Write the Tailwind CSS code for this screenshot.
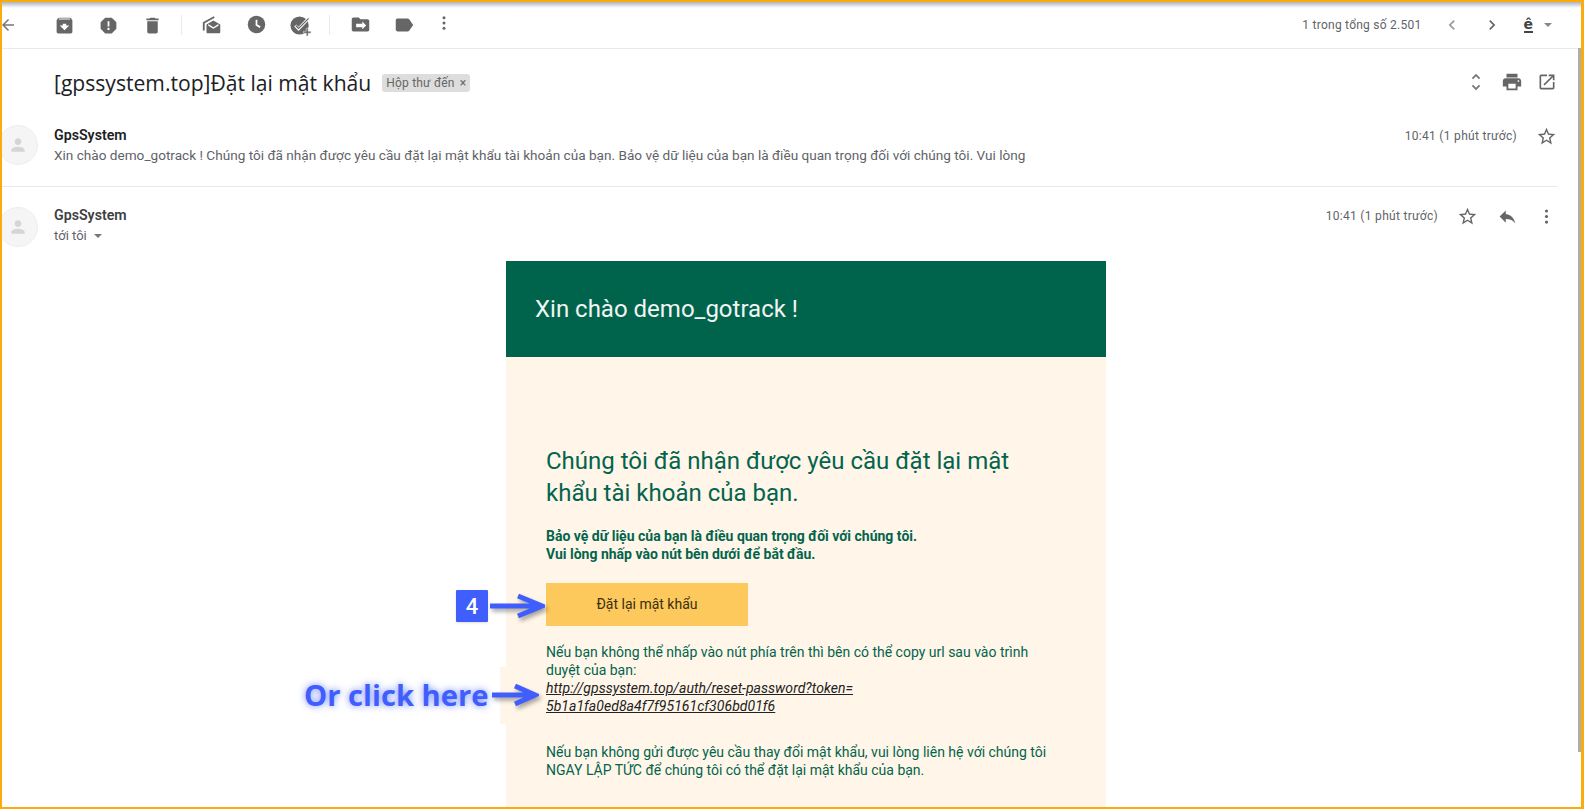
<!DOCTYPE html>
<html lang="en">
  <head>
    <meta charset="UTF-8" />
    <title>Gmail</title>
    <script src="https://cdn.jsdelivr.net/npm/@tailwindcss/browser@4"></script>
  </head>

  <body class="h-[809px] w-[1584px] overflow-hidden bg-white font-['Roboto',sans-serif]">
    <div class="relative h-[809px] w-[1584px] overflow-hidden border-t-[2px] border-b-[2px] border-l-[2px] border-r-[3px] border-[#fbab0c]">
      <!-- top shadow -->
      <div class="absolute top-0 left-0 right-0 h-[6px] bg-gradient-to-b from-gray-400/80 to-transparent"></div>
      <!-- scrollbar -->
      <div class="absolute top-[46px] right-0 h-[704px] w-[3px] bg-[#adadad]"></div>

      <!-- toolbar -->
      <div class="flex h-[47px] items-center justify-between border-b border-[#e8eaed] text-[#777777]">
        <div class="flex items-center">
          <svg class="ml-[-3px] h-[18px] w-[18px] fill-[#777777]" viewBox="0 0 24 24"><path d="M20 11H7.830l5.590-5.590L12 4l-8 8 8 8 1.410-1.410L7.830 13H20v-2z" /></svg>
          <div class="ml-[25px] flex w-[132px]">
            <div class="flex w-[44px] justify-center"><svg class="h-[21px] w-[21px] fill-[#666666]" viewBox="0 0 24 24"><path d="M20.540 5.230l-1.390-1.680C18.880 3.210 18.470 3 18 3H6c-.47 0-.88.21-1.160.55L3.460 5.230C3.170 5.570 3 6.020 3 6.500V19c0 1.100.9 2 2 2h14c1.100 0 2-.9 2-2V6.500c0-.48-.17-.93-.46-1.270zM12 17.500L6.500 12H10v-2h4v2h3.500L12 17.500zM5.120 5l.81-1h12l.94 1H5.120z" /></svg></div>
            <div class="flex w-[44px] justify-center"><svg class="h-[21px] w-[21px] fill-[#666666]" viewBox="0 0 24 24"><path d="M15.730 3H8.270L3 8.270v7.460L8.270 21h7.460L21 15.730V8.270L15.730 3zM12 17.300c-.72 0-1.300-.58-1.300-1.300 0-.72.58-1.300 1.300-1.300.72 0 1.300.58 1.300 1.300 0 .72-.58 1.300-1.300 1.300zm1-4.300h-2V7h2v6z" /></svg></div>
            <div class="flex w-[44px] justify-center"><svg class="h-[21px] w-[21px] fill-[#666666]" viewBox="0 0 24 24"><path d="M6 19c0 1.100.9 2 2 2h8c1.100 0 2-.9 2-2V7H6v12zM19 4h-3.500l-1-1h-5l-1 1H5v2h14V4z" /></svg></div>
          </div>
          <div class="mr-[8px] ml-[7px] h-[20px] w-px bg-[#e8eaed]"></div>
          <div class="flex">
            <div class="flex w-[44px] justify-center"><svg class="h-[22px] w-[22px] fill-[#666666]" viewBox="0 0 24 24"><path d="M2 9 14 2.500l1 1.700L4 10v8H2z" /><path d="M6 11.500 13.500 7 21 11.500V20c0 .6-.4 1-1 1H7c-.6 0-1-.4-1-1zm7.500 4.700 5.500-3.400v-1.800l-5.500 3.400-5.500-3.400v1.800z" /></svg></div>
            <div class="flex w-[44px] justify-center"><svg class="h-[21px] w-[21px]" viewBox="0 0 24 24"><circle cx="12" cy="12" r="10" class="fill-[#666666]" /><path d="M12 6.500V12.500l4.200 2.500" class="fill-none stroke-white stroke-2" /></svg></div>
            <div class="flex w-[44px] justify-center"><svg class="h-[23px] w-[23px]" viewBox="0 0 24 24"><circle cx="11" cy="12" r="9.500" class="fill-[#666666]" /><path d="M6.500 12l3.500 3.500L21 4" class="fill-none stroke-white stroke-[3]" /><path d="M7 12l3 3L20.500 4.500" class="fill-none stroke-[#666666] stroke-[1.200]" /><path d="M18 15h2v3h3v2h-3v3h-2v-3h-3v-2h3z" class="fill-[#666666] stroke-white stroke-[0.5]" /></svg></div>
          </div>
          <div class="mr-[8px] ml-[7px] h-[20px] w-px bg-[#e8eaed]"></div>
          <div class="flex">
            <div class="flex w-[44px] justify-center"><svg class="h-[21px] w-[21px] fill-[#666666]" viewBox="0 0 24 24"><path fill-rule="evenodd" d="M20 6h-8l-2-2H4c-1.100 0-2 .9-2 2v12c0 1.100.9 2 2 2h16c1.100 0 2-.9 2-2V8c0-1.100-.9-2-2-2zm-6 2.500L18.500 13 14 17.500V15H7v-4h7z" /></svg></div>
            <div class="flex w-[44px] justify-center"><svg class="h-[22px] w-[22px] fill-[#666666]" viewBox="0 0 24 24"><path d="M17.630 5.840C17.270 5.330 16.670 5 16 5L5 5.010C3.900 5.010 3 5.900 3 7v10c0 1.100.9 1.990 2 1.990L16 19c.67 0 1.270-.33 1.630-.84L22 12l-4.370-6.160z" /></svg></div>
            <div class="flex w-[36px] justify-center"><svg class="h-[18px] w-[18px] fill-[#666666]" viewBox="0 0 24 24"><circle cx="12" cy="5" r="2" /><circle cx="12" cy="12" r="2" /><circle cx="12" cy="19" r="2" /></svg></div>
          </div>
        </div>
        <div class="flex items-center">
          <span class="text-[12px] tracking-[0.25px] text-[#5f6368]">1 trong tổng số 2.501</span>
          <div class="ml-[19px] flex w-[62px] justify-between">
            <div class="flex w-[22px] justify-center"><svg class="h-[20px] w-[20px] fill-[#9a9a9a]" viewBox="0 0 24 24"><path d="M15.410 7.410L14 6l-6 6 6 6 1.410-1.410L10.830 12z" /></svg></div>
            <div class="flex w-[22px] justify-center"><svg class="h-[20px] w-[20px] fill-[#666666]" viewBox="0 0 24 24"><path d="M8.590 16.590L10 18l6-6-6-6-1.410 1.410L13.170 12z" /></svg></div>
          </div>
          <span class="ml-[21px] border-b-[2px] border-[#444444] font-['DejaVu_Sans',sans-serif] text-[14px] leading-[14px] font-semibold text-[#444444]">ê</span>
          <div class="mr-[29px] ml-[11px] h-0 w-0 border-x-[4px] border-t-[4px] border-x-transparent border-t-[#888888]"></div>
        </div>
      </div>

      <!-- subject -->
      <div class="flex h-[70px] items-center justify-between pr-[24px] pl-[52px]">
        <div class="mt-[-2px] flex items-center">
          <h1 class="font-['Open_Sans',sans-serif] text-[21.100px] leading-[28px] text-[#202124]">[gpssystem.top]Đặt lại mật khẩu</h1>
          <span class="ml-[11px] flex h-[18px] items-center rounded-[3px] bg-[#dddddd] px-[4px] text-[12px] tracking-[0.2px] text-[#666666]">Hộp thư đến <span class="ml-[5px] text-[12px]">×</span></span>
        </div>
        <div class="mt-[-4px] flex items-center gap-[14px]">
          <svg class="h-[22px] w-[22px] fill-[#777777]" viewBox="0 0 24 24"><path d="M12 5.830L15.170 9l1.410-1.410L12 3 7.410 7.590 8.830 9 12 5.830zm0 12.340L8.830 15l-1.410 1.410L12 21l4.590-4.590L15.170 15 12 18.170z" /></svg>
          <svg class="h-[22px] w-[22px] fill-[#666666]" viewBox="0 0 24 24"><path d="M19 8H5c-1.660 0-3 1.340-3 3v6h4v4h12v-4h4v-6c0-1.660-1.340-3-3-3zm-3 11H8v-5h8v5zm3-7c-.55 0-1-.45-1-1s.45-1 1-1 1 .45 1 1-.45 1-1 1zm-1-9H6v4h12V3z" /></svg>
          <svg class="h-[20px] w-[20px] fill-[#666666]" viewBox="0 0 24 24"><path d="M19 19H5V5h7V3H5c-1.110 0-2 .9-2 2v14c0 1.100.89 2 2 2h14c1.100 0 2-.9 2-2v-7h-2v7zM14 3v2h3.590l-9.830 9.830 1.410 1.410L19 6.410V10h2V3h-7z" /></svg>
        </div>
      </div>

      <!-- collapsed message -->
      <div class="mr-[24px] flex h-[68px] justify-between border-b border-[#e8e8e8]">
        <div class="flex">
          <div class="mt-[6px] ml-[-4px] flex h-[40px] w-[40px] items-center justify-center rounded-full border border-[#eeeeee] bg-[#f5f5f5]">
            <svg class="h-[20px] w-[20px] fill-[#d5d5d5]" viewBox="0 0 24 24"><path d="M12 12c2.210 0 4-1.790 4-4s-1.790-4-4-4-4 1.790-4 4 1.790 4 4 4zm0 2c-2.670 0-8 1.340-8 4v2h16v-2c0-2.660-5.330-4-8-4z" /></svg>
          </div>
          <div class="ml-[16px] pt-[7px]">
            <p class="text-[14.200px] leading-[18px] font-semibold text-[#202124]">GpsSystem</p>
            <p class="mt-[2px] text-[13.600px] leading-[18px] text-[#5f6368]">Xin chào demo_gotrack ! Chúng tôi đã nhận được yêu cầu đặt lại mật khẩu tài khoản của bạn. Bảo vệ dữ liệu của bạn là điều quan trọng đối với chúng tôi. Vui lòng</p>
          </div>
        </div>
        <div class="flex h-[34px] items-center">
          <span class="text-[12px] tracking-[0.3px] text-[#5f6368]">10:41 (1 phút trước)</span>
          <svg class="ml-[19px] h-[21px] w-[21px] fill-[#666666]" viewBox="0 0 24 24"><path d="M22 9.240l-7.190-.62L12 2 9.190 8.630 2 9.240l5.460 4.730L5.820 21 12 17.270 18.180 21l-1.630-7.030L22 9.240zM12 15.400l-3.760 2.270 1-4.280-3.320-2.880 4.380-.38L12 6.100l1.710 4.040 4.380.38-3.320 2.880 1 4.280L12 15.400z" /></svg>
        </div>
      </div>

      <!-- expanded message -->
      <div class="mr-[24px] flex h-[74px] justify-between">
        <div class="flex">
          <div class="mt-[20px] ml-[-4px] flex h-[40px] w-[40px] items-center justify-center rounded-full border border-[#eeeeee] bg-[#f5f5f5]">
            <svg class="h-[20px] w-[20px] fill-[#d5d5d5]" viewBox="0 0 24 24"><path d="M12 12c2.210 0 4-1.790 4-4s-1.790-4-4-4-4 1.790-4 4 1.790 4 4 4zm0 2c-2.670 0-8 1.340-8 4v2h16v-2c0-2.660-5.330-4-8-4z" /></svg>
          </div>
          <div class="ml-[16px] pt-[19px]">
            <p class="text-[14.200px] leading-[18px] font-semibold text-[#3c4043]">GpsSystem</p>
            <p class="mt-[3px] flex items-center text-[13px] leading-[18px] text-[#5f6368]">tới tôi<span class="ml-[7px] h-0 w-0 border-x-[4px] border-t-[4px] border-x-transparent border-t-[#777777]"></span></p>
          </div>
        </div>
        <div class="flex h-[58px] items-center">
          <span class="text-[12px] tracking-[0.3px] text-[#5f6368]">10:41 (1 phút trước)</span>
          <svg class="ml-[19px] h-[21px] w-[21px] fill-[#666666]" viewBox="0 0 24 24"><path d="M22 9.240l-7.190-.62L12 2 9.190 8.630 2 9.240l5.460 4.730L5.820 21 12 17.270 18.180 21l-1.630-7.030L22 9.240zM12 15.400l-3.760 2.270 1-4.280-3.320-2.880 4.380-.38L12 6.100l1.710 4.040 4.380.38-3.320 2.880 1 4.280L12 15.400z" /></svg>
          <svg class="ml-[19px] h-[21px] w-[21px] fill-[#666666]" viewBox="0 0 24 24"><path d="M10 9V5l-7 7 7 7v-4.100c5 0 8.500 1.600 11 5.100-1-5-4-10-11-11z" /></svg>
          <svg class="mr-[1px] ml-[19px] h-[19px] w-[19px] fill-[#666666]" viewBox="0 0 24 24"><circle cx="12" cy="5" r="2" /><circle cx="12" cy="12" r="2" /><circle cx="12" cy="19" r="2" /></svg>
        </div>
      </div>

      <!-- email body -->
      <div class="ml-[504px] w-[600px]">
        <div class="flex h-[96px] items-center bg-[#00644d] pb-[1px] pl-[29px] text-[24px] text-[#f1f5f2]">Xin chào demo_gotrack !</div>
        <div class="h-[460px] bg-[#fff6e9] px-[40px] pt-[88px] text-[#02644d]">
          <h2 class="w-[500px] text-[24px] leading-[32px]">Chúng tôi đã nhận được yêu cầu đặt lại mật khẩu tài khoản của bạn.</h2>
          <p class="mt-[18px] text-[14px] leading-[18px] font-bold">Bảo vệ dữ liệu của bạn là điều quan trọng đối với chúng tôi.<br />Vui lòng nhấp vào nút bên dưới để bắt đầu.</p>
          <a class="mt-[20px] flex h-[43px] w-[202px] items-center justify-center bg-[#fdc95c] text-[14px] text-[#3a2f10]">Đặt lại mật khẩu</a>
          <p class="mt-[17px] w-[510px] text-[14px] leading-[18px]">Nếu bạn không thể nhấp vào nút phía trên thì bên có thể copy url sau vào trình duyệt của bạn:<br /><a class="tracking-[0.04px] text-[#222222] italic underline">http://gpssystem.top/auth/reset-password?token=<br />5b1a1fa0ed8a4f7f95161cf306bd01f6</a></p>
          <p class="mt-[28px] w-[510px] text-[14px] leading-[18px]">Nếu bạn không gửi được yêu cầu thay đổi mật khẩu, vui lòng liên hệ với chúng tôi NGAY LẬP TỨC để chúng tôi có thể đặt lại mật khẩu của bạn.</p>
        </div>
      </div>

      <!-- annotations -->
      <div class="absolute top-[588px] left-[454px] flex h-[32px] w-[32px] items-center justify-center rounded-[1px] bg-[#3f5efb] text-[22px] font-medium text-white shadow-sm">4</div>
      <svg class="absolute top-[588px] left-[487px] h-[32px] w-[56px] drop-shadow-[2px_3px_2px_rgba(0,0,0,0.35)]" viewBox="0 0 56 32"><path d="M1 16H53M29 6l24 10-24 10" class="fill-none stroke-[#3f5efb] stroke-[5]" /></svg>
      <div class="absolute top-[665px] left-[498px] h-[57px] w-[6px] bg-[#fff6e9]"></div>
      <span class="absolute top-[672px] left-[302px] font-['Open_Sans',sans-serif] text-[29.200px] leading-[42px] font-bold whitespace-nowrap text-[#3f5efb] [text-shadow:0_0_7px_rgba(63,94,251,0.75)]">Or click here</span>
      <svg class="absolute top-[678px] left-[489px] h-[30px] w-[48px] drop-shadow-[2px_3px_2px_rgba(0,0,0,0.35)]" viewBox="0 0 48 30"><path d="M1 15H44M24 6l20 9-20 9" class="fill-none stroke-[#3f5efb] stroke-[5]" /></svg>
    </div>
  </body>
</html>
